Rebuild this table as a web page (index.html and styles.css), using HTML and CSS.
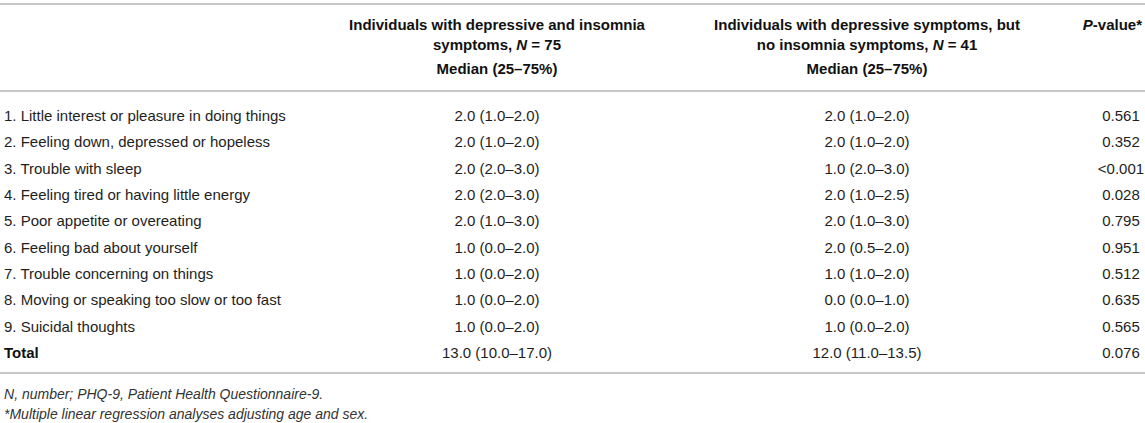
FILE: index.html
```html
<!DOCTYPE html>
<html lang="en">
<head>
  <meta charset="UTF-8" />
  <title>PHQ-9 item scores</title>
  <link rel="stylesheet" href="styles.css">
</head>
<body>

  <table class="phq-table">
    <colgroup>
      <col class="col-item">
      <col class="col-a">
      <col class="col-b">
      <col class="col-p">
    </colgroup>
    <thead>
      <tr>
        <th class="item"></th>
        <th class="group">
          Individuals with depressive and insomnia<br>symptoms, <i>N</i> = 75
          <div class="sub">Median (25–75%)</div>
        </th>
        <th class="group">
          Individuals with depressive symptoms, but<br>no insomnia symptoms, <i>N</i> = 41
          <div class="sub">Median (25–75%)</div>
        </th>
        <th class="pval"><i>P</i>-value*</th>
      </tr>
    </thead>
    <tbody>
      <tr class="first">
        <td class="item">1. Little interest or pleasure in doing things</td>
        <td>2.0 (1.0–2.0)</td>
        <td>2.0 (1.0–2.0)</td>
        <td class="pval">0.561</td>
      </tr>
      <tr>
        <td class="item">2. Feeling down, depressed or hopeless</td>
        <td>2.0 (1.0–2.0)</td>
        <td>2.0 (1.0–2.0)</td>
        <td class="pval">0.352</td>
      </tr>
      <tr>
        <td class="item">3. Trouble with sleep</td>
        <td>2.0 (2.0–3.0)</td>
        <td>1.0 (2.0–3.0)</td>
        <td class="pval">&lt;0.001</td>
      </tr>
      <tr>
        <td class="item">4. Feeling tired or having little energy</td>
        <td>2.0 (2.0–3.0)</td>
        <td>2.0 (1.0–2.5)</td>
        <td class="pval">0.028</td>
      </tr>
      <tr>
        <td class="item">5. Poor appetite or overeating</td>
        <td>2.0 (1.0–3.0)</td>
        <td>2.0 (1.0–3.0)</td>
        <td class="pval">0.795</td>
      </tr>
      <tr>
        <td class="item">6. Feeling bad about yourself</td>
        <td>1.0 (0.0–2.0)</td>
        <td>2.0 (0.5–2.0)</td>
        <td class="pval">0.951</td>
      </tr>
      <tr>
        <td class="item">7. Trouble concerning on things</td>
        <td>1.0 (0.0–2.0)</td>
        <td>1.0 (1.0–2.0)</td>
        <td class="pval">0.512</td>
      </tr>
      <tr>
        <td class="item">8. Moving or speaking too slow or too fast</td>
        <td>1.0 (0.0–2.0)</td>
        <td>0.0 (0.0–1.0)</td>
        <td class="pval">0.635</td>
      </tr>
      <tr>
        <td class="item">9. Suicidal thoughts</td>
        <td>1.0 (0.0–2.0)</td>
        <td>1.0 (0.0–2.0)</td>
        <td class="pval">0.565</td>
      </tr>
      <tr class="total">
        <td class="item">Total</td>
        <td>13.0 (10.0–17.0)</td>
        <td>12.0 (11.0–13.5)</td>
        <td class="pval">0.076</td>
      </tr>
    </tbody>
  </table>

  <div class="notes">
    <p><i>N</i>, number; PHQ-9, Patient Health Questionnaire-9.</p>
    <p>*Multiple linear regression analyses adjusting age and sex.</p>
  </div>

</body>
</html>
```

FILE: styles.css
```css
*, *::before, *::after {
  box-sizing: border-box;
}

body {
  margin: 0;
  background: #fff;
  color: #1e1e1e;
  font-family: 'Liberation Sans', Arial, sans-serif;
  font-size: 15px;
}

.phq-table {
  width: 1145px;
  margin-top: 3px;
  border-collapse: collapse;
  table-layout: fixed;
  border-top: 2px solid #c8c8c8;
  border-bottom: 2px solid #c8c8c8;
}

.col-item { width: 330px; }
.col-a { width: 334px; }
.col-b { width: 406px; }
.col-p { width: 75px; }

th {
  font-weight: bold;
  color: #111;
  line-height: 20px;
  padding: 10px 0 11px;
  text-align: center;
  vertical-align: top;
  border-bottom: 2px solid #c8c8c8;
  white-space: nowrap;
}

th .sub {
  margin-top: 4px;
}

th.pval {
  text-align: right;
  padding-right: 3px;
}

td {
  padding: 4px 0;
  line-height: 18.33px;
  text-align: center;
  white-space: nowrap;
}

td.item {
  text-align: left;
  padding-left: 4px;
}

td.pval {
  padding-left: 27px;
}

tr.first td {
  padding-top: 15px;
}

tr.total td {
  padding-bottom: 10px;
}

tr.total .item {
  font-weight: bold;
  color: #111;
}

.notes {
  padding: 10px 4px 0;
  font-size: 14px;
  font-style: italic;
  color: #333;
}

.notes p {
  margin: 0;
  line-height: 20px;
}
```
